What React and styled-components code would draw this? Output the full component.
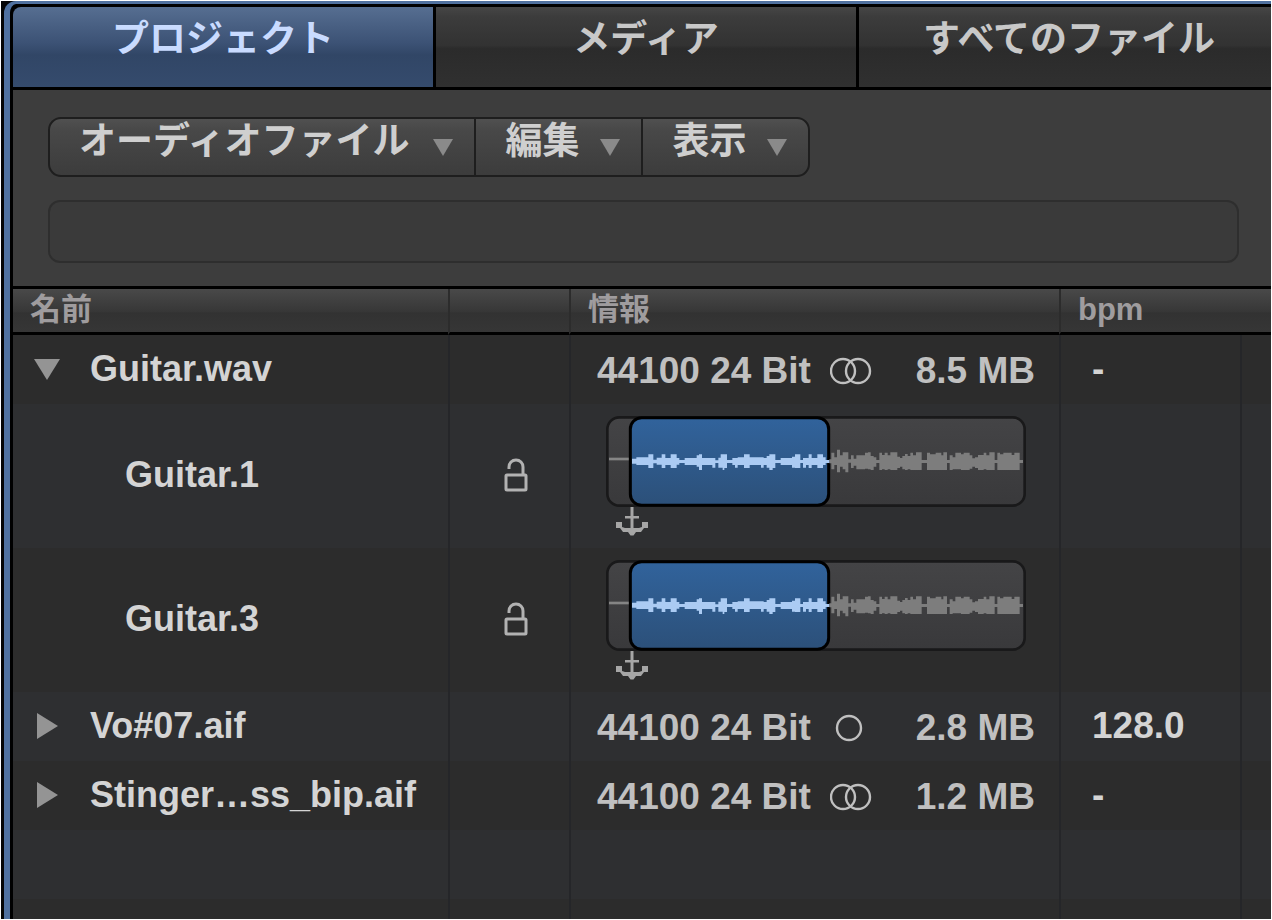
import { useState } from 'react';
import styled, { createGlobalStyle } from 'styled-components';

const GlobalStyle = createGlobalStyle`
* {
  box-sizing: border-box;
}

body {
  margin: 0;
  background: #fff;
  font-family: "Liberation Sans", "Noto Sans CJK JP", sans-serif;
  font-weight: bold;
}

button, input {
  font: inherit;
  color: inherit;
}

button {
  padding: 0;
  border: 0;
  background: none;
  cursor: pointer;
}

svg {
  display: block;
}
`;

const Page = styled.div`
display: flex;
min-height: 100vh;
padding: 1px;
`;

const Window = styled.div`
flex: 1;
min-width: 0;
display: flex;
padding-left: 3px;
background: #050505;
`;

const Browser = styled.main`
flex: 1;
min-width: 0;
display: flex;
flex-direction: column;
padding: 3px 0 0 3px;
border-top: 3px solid #50719f;
border-left: 6px solid #50719f;
border-radius: 12px 0 0 0;
background: #000;
overflow: hidden;
`;

const Tabs = styled.div`
display: flex;
gap: 3px;
margin-right: -8px;
`;

const Tab = styled.button`
flex: 1;
height: 80px;
padding-bottom: 15px;
border-radius: ${(props) => (props.$first ? '8px 0 0 0' : '0')};
font-size: 37px;
line-height: 60px;
white-space: nowrap;
color: ${(props) => (props.$active ? '#c9dbff' : '#c8c8c8')};
background: ${(props) =>
    props.$active
      ? 'linear-gradient(#566e91, #3c5275 45%, #314666 60%, #354b6d)'
      : 'linear-gradient(#464646, #3c3c3c 12%, #323232 48%, #2b2b2b 52%, #303030)'};
`;

const Toolbar = styled.div`
margin-top: 3px;
padding: 27px 32px 23px 35px;
background: #3d3d3d;
`;

const Menus = styled.div`
display: inline-flex;
vertical-align: top;
border: 2px solid #1e1e1e;
border-radius: 13px;
background: linear-gradient(#505050, #484848 20%, #3c3c3c);
overflow: hidden;
`;

const MenuButton = styled.button`
display: flex;
align-items: center;
gap: 24px;
height: 56px;
padding: 0 21px 0 29px;
color: #cfcfcf;

& + & {
  gap: 21px;
  border-left: 2px solid #1e1e1e;
}
`;

const MenuLabel = styled.span`
padding-bottom: 11px;
font-size: 37px;
line-height: 44px;
white-space: nowrap;
`;

const Search = styled.input`
display: block;
width: 100%;
height: 63px;
margin-top: 23px;
padding: 0 20px;
border: 2px solid #2e2e2e;
border-radius: 12px;
outline: none;
font-size: 37px;
color: #cfcfcf;
background: #3a3a3a;
`;

const ListArea = styled.div`
flex: 1;
display: grid;
margin-top: 3px;
background: #2c2c2c;
`;

const Table = styled.table`
width: 100%;
height: 100%;
table-layout: fixed;
border-collapse: separate;
border-spacing: 0;
`;

const Col = styled.col`
width: ${(props) => props.$width};
`;

const HeadCell = styled.th`
height: 46px;
padding: 0 0 2px 17px;
border-bottom: 3px solid #000;
border-left: ${(props) => (props.$line ? '2px solid #2c2c2c' : '0')};
text-align: left;
font-size: 31px;
line-height: 36px;
color: #9f9c9e;
background: linear-gradient(#494949, #373737 52%, #323232 56%, #363636);
`;

const Row = styled.tr`
height: ${(props) => props.$height || 'auto'};
background: ${(props) => (props.$odd ? '#2e2f31' : '#2c2c2c')};
`;

const Cell = styled.td`
padding: 0;
vertical-align: middle;
white-space: nowrap;

& + & {
  border-left: 2px solid #252629;
}
`;

const FileName = styled.div`
display: flex;
align-items: center;
gap: 29px;
padding: 0 0 2px 20px;
font-size: 36px;
line-height: 44px;
color: #d4d4d4;
`;

const RegionName = styled.div`
padding: 0 0 2px 112px;
font-size: 36px;
line-height: 44px;
color: #d4d4d4;
`;

const Toggle = styled.button`
width: 28px;
height: 28px;
display: grid;
place-items: center;
`;

const LockButton = styled.button`
display: block;
margin: 0 auto;
padding: 0 0 2px 13px;
`;

const Info = styled.div`
display: flex;
align-items: center;
gap: 19px;
padding: 2px 24px 0 26px;
font-size: 37px;
line-height: 44px;
color: #c0c0c0;
`;

const Size = styled.span`
margin-left: auto;
`;

const Bpm = styled.div`
padding: 0 0 2px 31px;
font-size: 37px;
line-height: 44px;
color: #d4d4d4;
`;

const Clip = styled.div`
padding-left: 35px;
`;

const AnchorButton = styled.button`
display: block;
margin-left: 9px;
`;

const files = [
  {
    name: 'Guitar.wav',
    format: '44100 24 Bit',
    stereo: true,
    size: '8.5 MB',
    bpm: '-',
    regions: ['Guitar.1', 'Guitar.3'],
  },
  { name: 'Vo#07.aif', format: '44100 24 Bit', stereo: false, size: '2.8 MB', bpm: '128.0', regions: [] },
  { name: 'Stinger…ss_bip.aif', format: '44100 24 Bit', stereo: true, size: '1.2 MB', bpm: '-', regions: [] },
];

// each step is [end x, peak above the axis, peak below the axis]
const regionWave = [
  [91, 8, 7], [127, 12, 11], [142, 21, 20], [152, 5, 6], [167, 11, 10], [178, 21, 20],
  [194, 10, 11], [212, 21, 20], [220, 10, 10], [236, 4, 5], [272, 10, 11], [279, 18, 16],
  [288, 21, 26], [319, 10, 11], [328, 10, 19], [337, 3, 5], [344, 11, 19], [350, 21, 19],
  [355, 21, 26], [363, 21, 20], [379, 4, 5], [387, 10, 11], [395, 10, 19], [414, 12, 11],
  [431, 21, 20], [465, 12, 11], [473, 12, 19], [482, 10, 11], [490, 16, 19], [500, 21, 26],
  [508, 21, 20], [524, 4, 5], [558, 10, 11], [567, 14, 19], [583, 21, 20], [591, 4, 5],
  [600, 10, 19], [608, 10, 11], [617, 21, 20], [634, 10, 11], [651, 21, 20], [659, 12, 11],
  [670, 4, 5],
];

const restWave = [
  [676, 6, 6], [685, 26, 24], [693, 12, 11], [702, 35, 33], [710, 18, 16], [718, 27, 24],
  [727, 27, 33], [735, 6, 4], [743, 18, 20], [751, 8, 13], [777, 18, 24], [786, 26, 22],
  [794, 27, 24], [803, 16, 26], [811, 12, 16], [820, 4, 5], [828, 26, 26], [836, 19, 24],
  [845, 26, 26], [853, 18, 24], [874, 27, 26], [882, 14, 20], [889, 10, 16], [897, 16, 24],
  [905, 22, 26], [913, 16, 24], [921, 26, 26], [930, 18, 26], [947, 27, 26], [963, 4, 5],
  [972, 26, 26], [989, 21, 26], [1006, 26, 26], [1012, 18, 26], [1023, 27, 26], [1031, 4, 5],
  [1040, 18, 26], [1048, 12, 24], [1065, 26, 24], [1073, 21, 26], [1091, 26, 26], [1099, 18, 22],
  [1107, 9, 16], [1116, 12, 20], [1133, 19, 26], [1141, 26, 24], [1150, 18, 26], [1166, 27, 26],
  [1174, 4, 5], [1182, 26, 26], [1192, 21, 26], [1217, 26, 26], [1225, 19, 26], [1241, 26, 26],
  [1251, 4, 5],
];

const AXIS = 136;

const wavePath = (start, steps) => {
  let x = start;
  return steps
    .map(([end, up, down]) => {
      const d = `M${x} ${AXIS - up}H${end}V${AXIS + down}H${x}Z`;
      x = end;
      return d;
    })
    .join('');
};

const ClipPreview = ({ id }) => (
  <svg width="420" height="91" viewBox="0 0 1260 273" role="img" aria-label="waveform">
    <defs>
      <linearGradient id={`${id}-rest`} x1="0" y1="0" x2="0" y2="1">
        <stop offset="0" stopColor="#444446" />
        <stop offset="1" stopColor="#39393b" />
      </linearGradient>
      <linearGradient id={`${id}-region`} x1="0" y1="0" x2="0" y2="1">
        <stop offset="0" stopColor="#31639c" />
        <stop offset="1" stopColor="#2c5079" />
      </linearGradient>
    </defs>
    <rect x="4" y="4" width="1252" height="265" rx="36" fill={`url(#${id}-rest)`} stroke="#19191a" strokeWidth="8" />
    <rect x="9" y="125" width="70" height="8" fill="#858585" />
    <rect x="73" y="5" width="595" height="263" rx="34" fill={`url(#${id}-region)`} stroke="#000" strokeWidth="9" />
    <path d={wavePath(670, restWave)} fill="#7d7d7d" />
    <path d={wavePath(78, regionWave)} fill="#abcbf3" />
  </svg>
);

const Anchor = () => (
  <svg width="34" height="29" viewBox="0 0 34 29" fill="#a6a6a6">
    <path d="M15.5 0h3v9h5.500v2.500h-5.500v9.500h-3v-9.500H10V9h5.500z" />
    <path d="M1 15h6v5l3 1h14l3-1v-5h6v6h-4l-3 4h-5l-2.500 3.500h-3L13 25H8l-3-4H1z" />
  </svg>
);

const Lock = () => (
  <svg width="24" height="34" viewBox="0 0 24 34" fill="none" stroke="#b2b2b2" strokeWidth="3">
    <rect x="2" y="17" width="20" height="15" rx="1" />
    <path d="M5 11V9c0-4 3-7 7-7s7 3 7 7v8" />
  </svg>
);

const Channels = ({ stereo }) => (
  <svg width="42" height="30" viewBox="0 0 42 30" fill="none" stroke="#c0c0c0" strokeWidth="2.4">
    {stereo ? (
      <>
        <circle cx="13" cy="15" r="12" />
        <circle cx="28" cy="15" r="12" />
      </>
    ) : (
      <circle cx="19" cy="15" r="12" />
    )}
  </svg>
);

const Disclosure = ({ open }) => (
  <svg width="26" height="26" viewBox="0 0 26 26" fill="#949494">
    <path d={open ? 'M0 3H26L13 24Z' : 'M3 0V26L24 13Z'} />
  </svg>
);

const MenuArrow = () => (
  <svg width="20" height="17" viewBox="0 0 20 17" fill="#8a8a8a">
    <path d="M0 0H20L10 17Z" />
  </svg>
);

const App = () => {
  const [tab, setTab] = useState('プロジェクト');
  const [open, setOpen] = useState(['Guitar.wav']);

  const toggle = (name) =>
    setOpen(open.includes(name) ? open.filter((item) => item !== name) : [...open, name]);

  const rows = files.flatMap((file) => [
    { file },
    ...(open.includes(file.name) ? file.regions.map((region) => ({ region })) : []),
  ]);

  return (
    <>
      <GlobalStyle />
      <Page>
        <Window>
          <Browser>
            <Tabs role="tablist">
              {['プロジェクト', 'メディア', 'すべてのファイル'].map((name, i) => (
                <Tab
                  key={name}
                  role="tab"
                  aria-selected={tab === name}
                  $active={tab === name}
                  $first={i === 0}
                  onClick={() => setTab(name)}
                >
                  {name}
                </Tab>
              ))}
            </Tabs>
            <Toolbar>
              <Menus>
                {['オーディオファイル', '編集', '表示'].map((name) => (
                  <MenuButton key={name} aria-haspopup="menu">
                    <MenuLabel>{name}</MenuLabel>
                    <MenuArrow />
                  </MenuButton>
                ))}
              </Menus>
              <Search type="text" aria-label="検索" />
            </Toolbar>
            <ListArea>
              <Table>
                <colgroup>
                  <Col $width="435px" />
                  <Col $width="121px" />
                  <Col $width="490px" />
                  <Col $width="181px" />
                  <Col $width="auto" />
                </colgroup>
                <thead>
                  <tr>
                    <HeadCell>名前</HeadCell>
                    <HeadCell $line />
                    <HeadCell $line>情報</HeadCell>
                    <HeadCell $line>bpm</HeadCell>
                    <HeadCell />
                  </tr>
                </thead>
                <tbody>
                  {rows.map(({ file, region }, i) =>
                    file ? (
                      <Row key={file.name} $height="69px" $odd={i % 2 === 1}>
                        <Cell>
                          <FileName>
                            <Toggle
                              aria-label={file.name}
                              aria-expanded={open.includes(file.name)}
                              onClick={() => toggle(file.name)}
                            >
                              <Disclosure open={open.includes(file.name)} />
                            </Toggle>
                            {file.name}
                          </FileName>
                        </Cell>
                        <Cell />
                        <Cell>
                          <Info>
                            <span>{file.format}</span>
                            <Channels stereo={file.stereo} />
                            <Size>{file.size}</Size>
                          </Info>
                        </Cell>
                        <Cell>
                          <Bpm>{file.bpm}</Bpm>
                        </Cell>
                        <Cell />
                      </Row>
                    ) : (
                      <Row key={region} $height="144px" $odd={i % 2 === 1}>
                        <Cell>
                          <RegionName>{region}</RegionName>
                        </Cell>
                        <Cell>
                          <LockButton aria-label="lock">
                            <Lock />
                          </LockButton>
                        </Cell>
                        <Cell>
                          <Clip>
                            <ClipPreview id={`clip-${i}`} />
                            <AnchorButton aria-label="anchor">
                              <Anchor />
                            </AnchorButton>
                          </Clip>
                        </Cell>
                        <Cell />
                        <Cell />
                      </Row>
                    )
                  )}
                  <Row $height="69px" $odd={rows.length % 2 === 1}>
                    <Cell />
                    <Cell />
                    <Cell />
                    <Cell />
                    <Cell />
                  </Row>
                  <Row $odd={rows.length % 2 === 0}>
                    <Cell />
                    <Cell />
                    <Cell />
                    <Cell />
                    <Cell />
                  </Row>
                </tbody>
              </Table>
            </ListArea>
          </Browser>
        </Window>
      </Page>
    </>
  );
};

export default App;
